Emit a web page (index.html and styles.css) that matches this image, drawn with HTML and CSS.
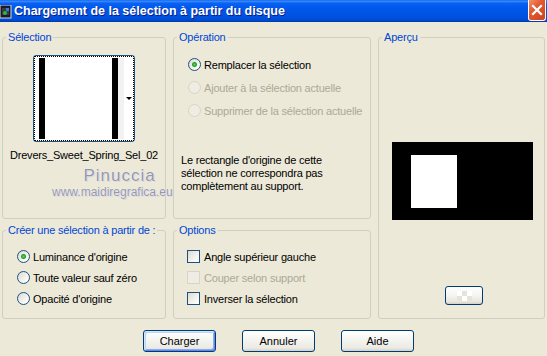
FILE: index.html
```html
<!DOCTYPE html>
<html lang="fr">
<head>
  <meta charset="UTF-8">
  <meta name="viewport" content="width=device-width, initial-scale=1.0">
  <title>Chargement de la sélection à partir du disque</title>
  <link rel="stylesheet" href="styles.css">
</head>
<body>
  <header class="titlebar">
    <svg class="app-icon" width="12" height="14" viewBox="0 0 12 14">
      <rect x="0" y="0" width="11" height="13" fill="#1a1a2e" stroke="#d8d8d8"/>
      <rect x="2" y="3" width="7" height="7" fill="#3b3b3b"/>
      <circle cx="5" cy="8" r="2" fill="#2fb34a"/>
      <rect x="6" y="3" width="3" height="3" fill="#3a7bd5"/>
    </svg>
    <h1>Chargement de la sélection à partir du disque</h1>
    <button class="close-btn" aria-label="Fermer">
      <svg width="16" height="19" viewBox="0 0 16 19">
        <path d="M4 5 L12 13 M12 5 L4 13" stroke="#fff" stroke-width="2.2" stroke-linecap="square"/>
      </svg>
    </button>
  </header>

  <main class="panels">
    <fieldset class="group sel-group">
      <legend>Sélection</legend>
      <div class="thumb">
        <div class="thumb-inner">
          <span class="bar"></span>
          <span class="blank"></span>
          <span class="bar"></span>
          <span class="strip"></span>
          <span class="drop"><i class="arrow"></i></span>
        </div>
      </div>
      <p class="file-name">Drevers_Sweet_Spring_Sel_02</p>
      <div class="watermark">
        <span class="wm-name">Pinuccia</span>
        <span class="wm-site">www.maidiregrafica.eu</span>
      </div>
    </fieldset>

    <fieldset class="group op-group">
      <legend>Opération</legend>
      <div class="choice-list op-list">
        <label class="choice"><input type="radio" name="op" checked> Remplacer la sélection</label>
        <label class="choice disabled"><input type="radio" name="op" disabled> Ajouter à la sélection actuelle</label>
        <label class="choice disabled"><input type="radio" name="op" disabled> Supprimer de la sélection actuelle</label>
      </div>
      <p class="note">Le rectangle d'origine de cette<br>sélection ne correspondra pas<br>complètement au support.</p>
    </fieldset>

    <fieldset class="group preview-group">
      <legend>Aperçu</legend>
      <div class="preview-canvas"><div class="preview-sel"></div></div>
      <button class="preview-btn"><span class="checker"></span></button>
    </fieldset>

    <fieldset class="group source-group">
      <legend>Créer une sélection à partir de :</legend>
      <div class="choice-list short">
        <label class="choice"><input type="radio" name="src" checked> Luminance d'origine</label>
        <label class="choice"><input type="radio" name="src"> Toute valeur sauf zéro</label>
        <label class="choice"><input type="radio" name="src"> Opacité d'origine</label>
      </div>
    </fieldset>

    <fieldset class="group options-group">
      <legend>Options</legend>
      <div class="choice-list short boxes">
        <label class="choice"><input type="checkbox"> Angle supérieur gauche</label>
        <label class="choice disabled"><input type="checkbox" disabled> Couper selon support</label>
        <label class="choice"><input type="checkbox"> Inverser la sélection</label>
      </div>
    </fieldset>
  </main>

  <footer class="actions">
    <button class="btn default">Charger</button>
    <button class="btn">Annuler</button>
    <button class="btn">Aide</button>
  </footer>
</body>
</html>
```

FILE: styles.css
```css
* {
  box-sizing: border-box;
}

body {
  margin: 0;
  width: 547px;
  height: 356px;
  overflow: hidden;
  background: #ece9d8;
  font-family: "Liberation Sans", Arial, sans-serif;
  font-size: 11px;
  letter-spacing: -0.2px;
  color: #000;
}

/* title bar */
.titlebar {
  display: flex;
  align-items: center;
  height: 22px;
  background: linear-gradient(to bottom, #0a5ee8 0%, #3d8eff 5%, #0a63f2 14%, #0058ee 35%, #0054e3 65%, #004fd8 85%, #0044c4 95%, #0037a8 100%);
}

.app-icon {
  flex: none;
  margin-top: 1px;
}

.titlebar h1 {
  flex: 1;
  margin: 0 0 0 2px;
  color: #fff;
  font-size: 12.5px;
  font-weight: bold;
  letter-spacing: 0;
  text-shadow: 1px 1px 0 #0a1e8c;
  white-space: nowrap;
}

.close-btn {
  align-self: flex-start;
  width: 18px;
  height: 21px;
  margin-right: 1px;
  padding: 0;
  border: 1px solid #fff;
  border-top: none;
  border-radius: 0 0 3px 3px;
  background: linear-gradient(135deg, #f0916c 0%, #e2582f 40%, #cc4421 100%);
  display: flex;
  align-items: center;
  justify-content: center;
}

/* groups */
.panels {
  display: grid;
  grid-template-columns: 164px 198px 167px;
  grid-template-rows: 188px 95px;
  column-gap: 7px;
  row-gap: 5px;
  padding: 9px 0 0 2px;
}

.group {
  margin: 0;
  padding: 0;
  min-width: 0;
  border: 1px solid #d0d0bf;
  border-radius: 3px;
}

.group legend {
  margin-left: 3px;
  padding: 0 2px;
  color: #0046d5;
  line-height: 13px;
}

.preview-group {
  grid-column: 3;
  grid-row: 1 / span 2;
}

/* selection */
.sel-group {
  position: relative;
}

.thumb {
  width: 102px;
  height: 87px;
  margin: 11px auto 0;
  border: 1px solid #1c5180;
  border-radius: 3px;
  background: #fff;
}

.thumb-inner {
  display: flex;
  height: 100%;
  padding: 1px 0 1px 4px;
  border: 1px dotted #000;
}

.bar {
  width: 6px;
  background: #000;
}

.blank {
  width: 67px;
}

.strip {
  width: 6px;
  background: #f2f2f2;
}

.drop {
  flex: 1;
  display: flex;
  align-items: center;
  justify-content: center;
}

.arrow {
  border-top: 3px solid #000;
  border-left: 3px solid transparent;
  border-right: 3px solid transparent;
}

.file-name {
  margin: 7px 0 0;
  text-align: center;
  line-height: 13px;
}

.watermark {
  position: absolute;
  left: 49px;
  top: 122px;
  display: flex;
  flex-direction: column;
  align-items: flex-end;
  color: #9696ac;
  letter-spacing: 0;
  text-shadow: 0 0 1px #fff, 1px 1px 0 #d8d8e4;
  white-space: nowrap;
}

.wm-name {
  font-size: 17px;
  letter-spacing: 1px;
  line-height: 20px;
  margin-right: 17px;
}

.wm-site {
  font-size: 12px;
  line-height: 14px;
  margin-top: -1px;
}

/* radio / checkbox lists */
.choice-list {
  display: flex;
  flex-direction: column;
  padding: 9px 0 0 14px;
}

.choice {
  display: flex;
  align-items: center;
  height: 23px;
  white-space: nowrap;
}

.choice-list.short .choice {
  height: 21px;
}

.choice-list.boxes {
  padding-left: 13px;
}

.choice input {
  appearance: none;
  flex: none;
  width: 13px;
  height: 13px;
  margin: 0 3px 0 0;
  border: 1px solid #1c5180;
  background: linear-gradient(135deg, #dcdad0 0%, #f4f4f0 60%, #fff 100%);
}

.choice input[type="radio"] {
  border-radius: 50%;
}

.choice input[type="radio"]:checked {
  background: radial-gradient(circle, #5fd35f 0, #21a121 2px, transparent 3px), linear-gradient(135deg, #dcdad0 0%, #f4f4f0 60%, #fff 100%);
}

.choice input[type="checkbox"] {
  margin-right: 4px;
}

.choice.disabled {
  color: #aca899;
}

.choice.disabled input {
  border-color: #d8d5c6;
  background: #efede3;
}

.note {
  margin: 32px 0 0 7px;
  line-height: 13px;
}

/* preview */
.preview-canvas {
  width: 141px;
  height: 78px;
  margin: 98px 0 0 13px;
  padding: 13px 0 0 19px;
  background: #000;
}

.preview-sel {
  width: 46px;
  height: 53px;
  background: #fff;
}

.preview-btn {
  display: flex;
  align-items: center;
  justify-content: center;
  width: 38px;
  height: 19px;
  margin: 66px 0 0 66px;
  padding: 0;
  border: 1px solid #003c74;
  border-radius: 3px;
  background: linear-gradient(to bottom, #fff 0%, #f4f4f0 50%, #e8e7e0 85%, #d6d0c5 100%);
}

.checker {
  width: 15px;
  height: 10px;
  background: conic-gradient(#e4e3dc 25%, #fff 0 50%, #e4e3dc 0 75%, #fff 0);
  background-size: 10px 10px;
}

/* bottom buttons */
.actions {
  display: flex;
  gap: 26px;
  margin-top: 11px;
  padding-left: 143px;
}

.btn {
  width: 73px;
  height: 22px;
  padding: 0;
  border: 1px solid #003c74;
  border-radius: 3px;
  background: linear-gradient(to bottom, #fff 0%, #f4f4f0 45%, #ebeae3 85%, #d6d0c5 100%);
  font-family: inherit;
  font-size: 11px;
  font-weight: normal;
  letter-spacing: 0;
  color: #000;
}

.btn.default {
  box-shadow: inset 1px 1px 0 #cee7ff, inset -1px -1px 0 #6982ee, inset 2px 2px 0 #bcd4f6, inset -2px -2px 0 #89adf0;
}
```
